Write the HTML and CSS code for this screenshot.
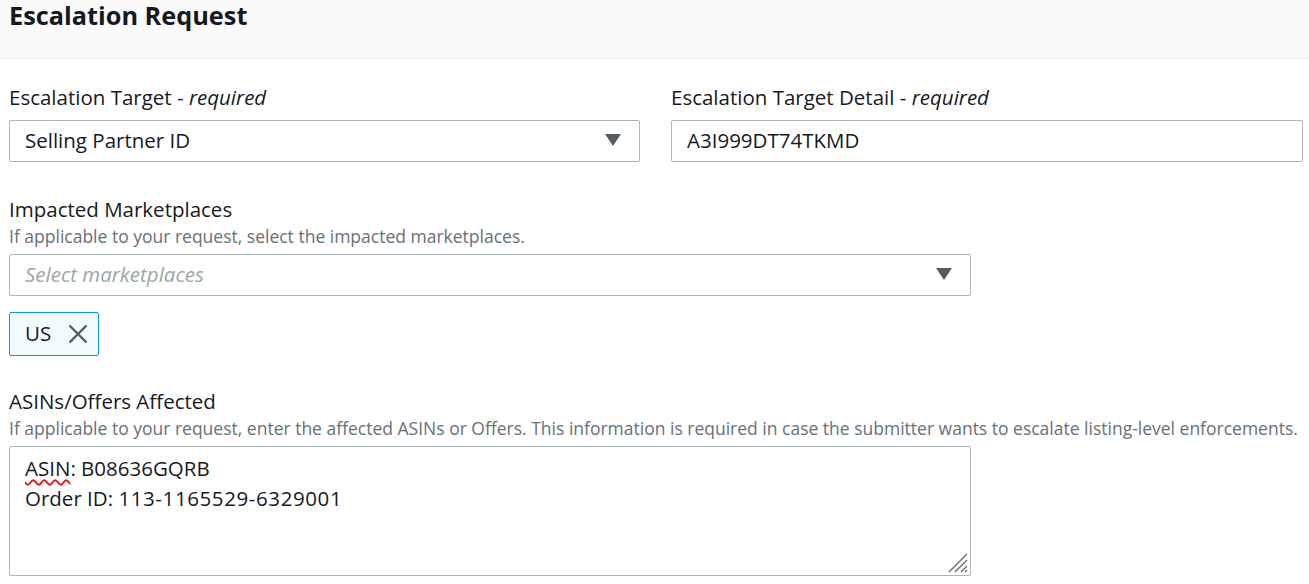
FILE: index.html
```html
<!DOCTYPE html>
<html lang="en">
<head>
<meta charset="utf-8">
<title>Escalation Request</title>
<link rel="stylesheet" href="styles.css">
</head>
<body>
  <div class="header">
    <h1 class="header-title">Escalation Request</h1>
  </div>

  <div class="form">
    <div class="row-two">
      <div class="field">
        <div class="field-label">Escalation Target - <i>required</i></div>
        <div class="control select control-first">
          <span class="select-value">Selling Partner ID</span>
          <span class="caret"></span>
        </div>
      </div>
      <div class="field">
        <div class="field-label">Escalation Target Detail - <i>required</i></div>
        <div class="control input control-first">A3I999DT74TKMD</div>
      </div>
    </div>

    <div class="field field-market">
      <div class="field-label">Impacted Marketplaces</div>
      <div class="field-desc">If applicable to your request, select the impacted marketplaces.</div>
      <div class="control select">
        <span class="select-placeholder">Select marketplaces</span>
        <span class="caret"></span>
      </div>
      <div class="tokens">
        <div class="token">
          <span class="token-label">US</span>
          <svg class="token-dismiss" width="20" height="20" viewBox="0 0 20 20" aria-hidden="true">
            <path d="M1.5 1.5 L18.5 18.5 M18.5 1.5 L1.5 18.5" stroke="#545b64" stroke-width="2.4" fill="none"/>
          </svg>
        </div>
      </div>
    </div>

    <div class="field field-asins">
      <div class="field-label">ASINs/Offers Affected</div>
      <div class="field-desc">If applicable to your request, enter the affected ASINs or Offers. This information is required in case the submitter wants to escalate listing-level enforcements.</div>
      <div class="control textarea">
        <div class="textarea-line"><span class="misspelled">ASIN</span>: B08636GQRB</div>
        <div class="textarea-line">Order ID: <span class="digits">113-1165529-6329001</span></div>
        <svg class="resizer" width="22" height="22" viewBox="0 0 22 22" aria-hidden="true">
          <path d="M21 3 L3 21 M21 9 L9 21 M21 15 L15 21 M21 19 L19 21" stroke="#6a6a6a" stroke-width="1.3" fill="none"/>
        </svg>
      </div>
    </div>
  </div>
</body>
</html>
```

FILE: styles.css
```css
* {
  box-sizing: border-box;
}

body {
  margin: 0;
  background: #ffffff;
  color: #16191f;
  font-family: "Open Sans", Roboto, "Liberation Sans", Arial, sans-serif;
  font-size: 20.5px;
}

.header {
  height: 59px;
  padding: 0 9px;
  background: #fafafa;
  border-bottom: 1px solid #eaeded;
}

.header-title {
  margin: 0;
  font-size: 25.3px;
  line-height: 30px;
  font-weight: 700;
  color: #16191f;
}

.form {
  padding: 25px 6px 0 9px;
}

.row-two {
  display: grid;
  grid-template-columns: 631px 632px;
  column-gap: 31px;
}

.field-label {
  font-size: 20.5px;
  line-height: 26px;
  color: #16191f;
}

.field-label i {
  font-style: italic;
}

.field-desc {
  margin-top: 3px;
  font-size: 17.5px;
  line-height: 22px;
  color: #687078;
}

.control {
  position: relative;
  margin-top: 7px;
  height: 42px;
  border: 1px solid #aab7b8;
  border-radius: 2px;
  background: #ffffff;
  display: flex;
  align-items: center;
  padding: 0 15px 2px;
  font-size: 20.5px;
}

.control-first {
  margin-top: 10px;
}

.select {
  justify-content: space-between;
}

.select-placeholder {
  color: #9aa6a8;
  font-style: italic;
}

.caret {
  width: 0;
  height: 0;
  margin-right: 3px;
  border-left: 8px solid transparent;
  border-right: 8px solid transparent;
  border-top: 12px solid #545b64;
}

.field-market {
  margin-top: 34px;
  width: 962px;
}

.tokens {
  display: flex;
  margin-top: 16px;
}

.token {
  display: flex;
  align-items: center;
  gap: 17px;
  height: 44px;
  padding: 0 10px 2px 15px;
  background: #f1faff;
  border: 1px solid #00a1c9;
  border-radius: 2px;
  font-size: 20.5px;
}

.token-dismiss {
  display: block;
  margin-top: 2px;
}

.field-asins {
  margin-top: 32px;
}

.textarea {
  display: block;
  width: 962px;
  height: 130px;
  padding: 6px 15px;
  line-height: 30px;
}

.digits {
  letter-spacing: 0.6px;
}

.misspelled {
  text-decoration: underline wavy #e8141c;
  text-decoration-thickness: 1.5px;
  text-underline-offset: 3px;
}

.resizer {
  position: absolute;
  right: 2px;
  bottom: 2px;
}
```
